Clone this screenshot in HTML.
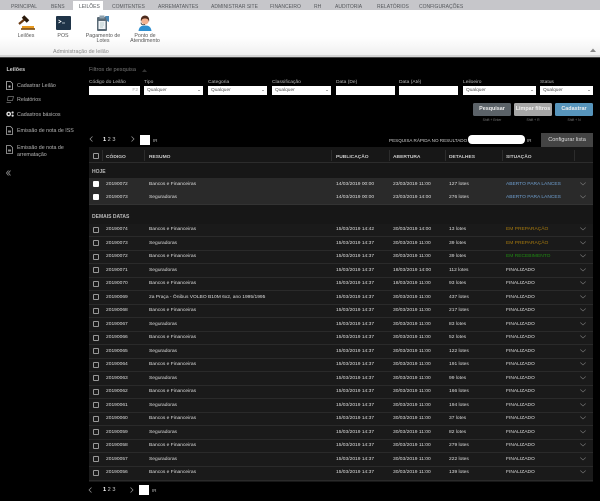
<!DOCTYPE html>
<html lang="pt"><head><meta charset="utf-8"><title>Leilões</title>
<style>
html,body{margin:0;padding:0;background:#000;width:600px;height:501px;overflow:hidden}
body{font-family:"Liberation Sans",sans-serif;font-size:5px;color:#ddd;position:relative}
.a{position:absolute;white-space:nowrap}
#tabs{position:absolute;left:0;top:0;width:600px;height:10px;background:#c6c6ca}
.tb{position:absolute;top:2.5px;font-size:5px;line-height:8px;color:#55585c;white-space:nowrap}
#act{position:absolute;left:73px;top:1px;width:30px;height:10px;background:#fff}
#rib{position:absolute;left:0;top:10px;width:600px;height:45px;background:linear-gradient(#fff 0,#fff 60%,#f0f0f0 100%)}
#ln{position:absolute;left:0;top:55px;width:600px;height:2.5px;background:#d5d5d5;border-bottom:1px solid #444;box-sizing:border-box}
.ic{position:absolute;text-align:center;color:#555;font-size:5.3px;line-height:5.8px}
.side{position:absolute;left:17px;color:#b5b5b5;font-size:5.3px;line-height:7px;white-space:nowrap}
.lb{position:absolute;top:79.5px;color:#bbb;font-size:4.9px;line-height:6px;white-space:nowrap}
.in{position:absolute;top:86px;height:9px;background:#fff;color:#555;font-size:4.8px;line-height:9.5px;box-sizing:border-box;padding-left:3px}
.in i{position:absolute;right:3px;top:3.5px;width:0;height:0;border-left:1.2px solid transparent;border-right:1.2px solid transparent;border-top:1.6px solid #555}
.btn{position:absolute;top:103px;height:13px;border-radius:1.5px;color:#eee;font-weight:bold;font-size:5.4px;line-height:13.5px;text-align:center;box-sizing:border-box}
.sh{position:absolute;top:117.5px;color:#777;font-size:3.4px;line-height:4px;text-align:center}
#tb{position:absolute;left:89px;top:147px;width:504px;height:335px;background:#171717}
.r{position:absolute;left:89px;width:504px;height:13.5px;line-height:12.5px;background:#1a1a1a;border-bottom:1px solid #2a2a2a;box-sizing:border-box;font-size:4.9px;color:#ddd;white-space:nowrap}
.r.h{background:#2a2a2a;border-bottom:1px solid #333}
.r b{position:absolute;font-weight:normal;top:.8px}
.r .c{left:17px}.r .s{left:60px}.r .p{left:247px}.r .o{left:304px}.r .d{left:360px}.r .t{left:417px}
.cb{position:absolute;left:3.5px;top:3px;width:6px;height:6px;border:1px solid #999;border-radius:1px;box-sizing:border-box}
.h .cb{background:#fff;border-color:#fff}
.r svg{position:absolute;left:491px;top:3.5px}
.th{position:absolute;top:154.3px;font-weight:bold;color:#ccc;font-size:4.9px;line-height:7px;white-space:nowrap}
.sp{position:absolute;top:150px;width:1px;height:11px;background:#2c2c2c}
.g{position:absolute;left:92px;font-weight:bold;color:#bbb;font-size:5px;line-height:6px}
.bl{color:#6f9fcf}.y{color:#a5790e}.gr{color:#1f8a12}
</style></head><body>
<div id="tabs"></div><div id="act"></div>
<div id="rib"></div>
<div id="ln"></div>
<span class="tb" style="left:11px">PRINCIPAL</span>
<span class="tb" style="left:51px">BENS</span>
<span class="tb" style="left:79px">LEILÕES</span>
<span class="tb" style="left:112px">COMITENTES</span>
<span class="tb" style="left:158px">ARREMATANTES</span>
<span class="tb" style="left:211px">ADMINISTRAR SITE</span>
<span class="tb" style="left:270px">FINANCEIRO</span>
<span class="tb" style="left:314px">RH</span>
<span class="tb" style="left:335px">AUDITORIA</span>
<span class="tb" style="left:377px">RELATÓRIOS</span>
<span class="tb" style="left:419px">CONFIGURAÇÕES</span>

<svg class="a" style="left:17px;top:15px" width="18" height="16" viewBox="0 0 18 16"><path d="M2 9L8 4" stroke="#6b3a12" stroke-width="2.2"/><path d="M6 1.5L11 6.5" stroke="#2b1a0c" stroke-width="3.6"/><rect x="5" y="11" width="12" height="2.4" fill="#e89a20"/><rect x="4" y="13.2" width="14" height="1.6" fill="#7a4a10"/></svg>
<svg class="a" style="left:56px;top:16px" width="15" height="14" viewBox="0 0 15 14"><rect width="15" height="14" rx="1" fill="#1f3448"/><path d="M2.5 4L5 5.5L2.5 7" stroke="#fff" stroke-width=".8" fill="none"/><path d="M6 7H9" stroke="#cfd8df" stroke-width=".8"/></svg>
<svg class="a" style="left:96px;top:15px" width="14" height="16" viewBox="0 0 14 16"><rect x="1" y="2" width="10" height="14" rx="1" fill="#5a6a76"/><rect x="2.5" y="6" width="7" height="8" fill="#eef2f5"/><rect x="3.5" y="0.5" width="5" height="3" fill="#8ea0ac"/><path d="M4 8H8M4 10H8M4 12H7" stroke="#8aa" stroke-width=".6"/><path d="M9 1L13 1V7L11 6" fill="#4a87b5"/></svg>
<svg class="a" style="left:138px;top:15px" width="14" height="16" viewBox="0 0 14 16"><path d="M0.5 16C1 12 3 10.5 7 10.5S13 12 13.5 16Z" fill="#2f8fd0"/><circle cx="7" cy="6" r="3.6" fill="#f2b08e"/><path d="M3 7C2 2 5 0.5 7 0.5S12 2 11 7C10.5 4 9 3.5 7 3.5S3.5 4 3 7Z" fill="#4d2a1c"/><path d="M3 7.5C3 10 5 10 7 9.5" stroke="#333" stroke-width=".7" fill="none"/></svg>
<div class="ic" style="left:10px;top:33.5px;width:32px">Leilões</div>
<div class="ic" style="left:47px;top:33.5px;width:32px">POS</div>
<div class="ic" style="left:83px;top:33.5px;width:40px">Pagamento de<br>Lotes</div>
<div class="ic" style="left:125px;top:33.5px;width:40px">Ponto de<br>Atendimento</div>
<div class="a" style="left:53px;top:49px;color:#888;font-size:5.4px;line-height:6px">Administração de leilão</div>
<svg class="a" style="left:590px;top:48px" width="6" height="4" viewBox="0 0 6 4"><path d="M0 4L3 .5L6 4Z" fill="#888"/></svg>

<div class="a" style="left:6.5px;top:67px;font-weight:bold;color:#ccc;font-size:5.4px;line-height:7px">Leilões</div>
<svg class="a" style="left:6px;top:81px" width="7" height="9" viewBox="0 0 7 9"><path d="M.5.5H4.5L6.5 2.5V8.5H.5Z" fill="none" stroke="#bbb" stroke-width=".8"/><rect x="2.5" y="4.5" width="2" height="2" fill="#bbb"/></svg>
<div class="side" style="top:82.5px">Cadastrar Leilão</div>
<svg class="a" style="left:6px;top:96px" width="8" height="7" viewBox="0 0 8 7"><path d="M2 .5H7.5L6.5 4.5H1.5ZM.5 6.5H5" fill="none" stroke="#777" stroke-width=".7"/></svg>
<div class="side" style="top:97px">Relatórios</div>
<svg class="a" style="left:6px;top:111px" width="8" height="6" viewBox="0 0 8 6"><circle cx="2.7" cy="3" r="1.7" fill="none" stroke="#ddd" stroke-width="1.4"/><circle cx="6.6" cy="1.5" r="1.1" fill="#ddd"/><circle cx="6.6" cy="4.6" r="1.1" fill="#ddd"/></svg>
<div class="side" style="top:112px">Cadastros básicos</div>
<svg class="a" style="left:6px;top:126px" width="7" height="9" viewBox="0 0 7 9"><path d="M.5.5H4.5L6.5 2.5V8.5H.5Z" fill="none" stroke="#aaa" stroke-width=".8"/><rect x="2" y="4.5" width="3" height="2" fill="#888"/></svg>
<div class="side" style="top:128px">Emissão de nota de ISS</div>
<svg class="a" style="left:6px;top:145px" width="7" height="9" viewBox="0 0 7 9"><path d="M.5.5H4.5L6.5 2.5V8.5H.5Z" fill="none" stroke="#aaa" stroke-width=".8"/><rect x="2" y="4.5" width="3" height="2" fill="#888"/></svg>
<div class="side" style="top:145px;line-height:6.8px">Emissão de nota de<br>arrematação</div>
<svg class="a" style="left:6px;top:170px" width="5" height="6" viewBox="0 0 5 6"><path d="M2.5 .5L.5 3L2.5 5.5M4.5 .5L2.5 3L4.5 5.5" fill="none" stroke="#888" stroke-width=".9"/></svg>

<div class="a" style="left:89px;top:67px;color:#777;font-size:5.6px;line-height:7px">Filtros de pesquisa</div>
<svg class="a" style="left:142px;top:69px" width="5" height="3" viewBox="0 0 5 3"><path d="M0 3L2.5 0L5 3Z" fill="#333"/></svg>
<div class="lb" style="left:89px">Código do Leilão</div>
<div class="lb" style="left:144px">Tipo</div>
<div class="lb" style="left:208px">Categoria</div>
<div class="lb" style="left:272px">Classificação</div>
<div class="lb" style="left:336px">Data (De)</div>
<div class="lb" style="left:399px">Data (Até)</div>
<div class="lb" style="left:463px">Leiloeiro</div>
<div class="lb" style="left:540px">Status</div>
<div class="in" style="left:89px;width:51px;text-align:right;padding-right:2px;color:#aaa">F2</div>
<div class="in" style="left:144px;width:59px">Qualquer<i></i></div>
<div class="in" style="left:208px;width:59px">Qualquer<i></i></div>
<div class="in" style="left:272px;width:59px">Qualquer<i></i></div>
<div class="in" style="left:336px;width:59px"></div>
<div class="in" style="left:399px;width:59px"></div>
<div class="in" style="left:463px;width:73px">Qualquer<i></i></div>
<div class="in" style="left:540px;width:53px">Qualquer<i></i></div>
<div class="btn" style="left:473px;width:38px;background:#5b6268">Pesquisar</div>
<div class="btn" style="left:514px;width:38px;background:#a6a6a6">Limpar filtros</div>
<div class="btn" style="left:555px;width:38px;background:#5795bc">Cadastrar</div>
<div class="sh" style="left:473px;width:38px">Shift + Enter</div>
<div class="sh" style="left:514px;width:38px">Shift + R</div>
<div class="sh" style="left:555px;width:38px">Shift + N</div>

<svg class="a" style="left:89px;top:136px" width="4" height="6" viewBox="0 0 4 6"><path d="M3.5 .5L1 3L3.5 5.5" fill="none" stroke="#999" stroke-width=".7"/></svg>
<div class="a" style="left:103px;top:136.5px;font-size:5.6px;line-height:7px;color:#ccc"><b style="color:#fff">1</b> 2 3</div>
<svg class="a" style="left:131px;top:136px" width="4" height="6" viewBox="0 0 4 6"><path d="M.5 .5L3 3L.5 5.5" fill="none" stroke="#999" stroke-width=".7"/></svg>
<div class="a" style="left:140px;top:135px;width:10px;height:9.5px;background:#fff"></div>
<div class="a" style="left:153px;top:137.5px;font-size:4.4px;line-height:6px;color:#bbb">IR</div>
<div class="a" style="left:389px;top:137.5px;font-size:4.6px;line-height:6px;color:#ccc">PESQUISA RÁPIDA NO RESULTADO</div>
<div class="a" style="left:468px;top:135px;width:57px;height:9px;background:#fff;border-radius:4px"></div>
<div class="a" style="left:527px;top:137.5px;font-size:4.4px;line-height:6px;color:#bbb">IR</div>
<div class="a" style="left:541px;top:133px;width:52px;height:14px;background:#444;color:#ddd;font-size:5.6px;line-height:14.5px;text-align:center">Configurar lista</div>

<div id="tb"></div>
<div class="a" style="left:89px;top:162px;width:504px;height:1px;background:#2c2c2c"></div>
<div class="a" style="left:92.5px;top:152.5px;width:6px;height:6px;border:1px solid #999;border-radius:1px;box-sizing:border-box"></div>
<div class="sp" style="left:102px"></div><div class="sp" style="left:144px"></div><div class="sp" style="left:331px"></div><div class="sp" style="left:389px"></div><div class="sp" style="left:445px"></div><div class="sp" style="left:502px"></div><div class="sp" style="left:574px"></div>
<div class="th" style="left:106px">CÓDIGO</div><div class="th" style="left:149px">RESUMO</div><div class="th" style="left:336px">PUBLICAÇÃO</div><div class="th" style="left:393px">ABERTURA</div><div class="th" style="left:449px">DETALHES</div><div class="th" style="left:506px">SITUAÇÃO</div>
<div class="g" style="top:168.5px">HOJE</div>
<div class="g" style="top:213.5px">DEMAIS DATAS</div>

<div class="r h" style="top:178px"><span class="cb"></span><b class="c">20190072</b><b class="s">Bancos e Financeiras</b><b class="p">14/03/2019 00:00</b><b class="o">23/03/2019 11:00</b><b class="d">127 lotes</b><b class="t bl">ABERTO PARA LANCES</b><svg width="6" height="4" viewBox="0 0 6 4"><path d="M.3.5L3 3L5.7.5" fill="none" stroke="#777" stroke-width=".6"/></svg></div>
<div class="r h" style="top:191px"><span class="cb"></span><b class="c">20190073</b><b class="s">Seguradoras</b><b class="p">14/03/2019 00:00</b><b class="o">23/03/2019 14:00</b><b class="d">276 lotes</b><b class="t bl">ABERTO PARA LANCES</b><svg width="6" height="4" viewBox="0 0 6 4"><path d="M.3.5L3 3L5.7.5" fill="none" stroke="#777" stroke-width=".6"/></svg></div>

<div class="r" style="top:223.5px"><span class="cb"></span><b class="c">20190074</b><b class="s">Bancos e Financeiras</b><b class="p">15/03/2019 14:42</b><b class="o">30/03/2019 14:00</b><b class="d">13 lotes</b><b class="t y">EM PREPARAÇÃO</b><svg width="6" height="4" viewBox="0 0 6 4"><path d="M.3.5L3 3L5.7.5" fill="none" stroke="#777" stroke-width=".6"/></svg></div>
<div class="r" style="top:237px"><span class="cb"></span><b class="c">20190073</b><b class="s">Seguradoras</b><b class="p">15/03/2019 14:37</b><b class="o">30/03/2019 11:00</b><b class="d">39 lotes</b><b class="t y">EM PREPARAÇÃO</b><svg width="6" height="4" viewBox="0 0 6 4"><path d="M.3.5L3 3L5.7.5" fill="none" stroke="#777" stroke-width=".6"/></svg></div>
<div class="r" style="top:250.5px"><span class="cb"></span><b class="c">20190072</b><b class="s">Bancos e Financeiras</b><b class="p">15/03/2019 14:37</b><b class="o">30/03/2019 11:00</b><b class="d">39 lotes</b><b class="t gr">EM RECEBIMENTO</b><svg width="6" height="4" viewBox="0 0 6 4"><path d="M.3.5L3 3L5.7.5" fill="none" stroke="#777" stroke-width=".6"/></svg></div>
<div class="r" style="top:264px"><span class="cb"></span><b class="c">20190071</b><b class="s">Seguradoras</b><b class="p">15/03/2019 14:37</b><b class="o">18/03/2019 14:00</b><b class="d">112 lotes</b><b class="t">FINALIZADO</b><svg width="6" height="4" viewBox="0 0 6 4"><path d="M.3.5L3 3L5.7.5" fill="none" stroke="#777" stroke-width=".6"/></svg></div>
<div class="r" style="top:277.5px"><span class="cb"></span><b class="c">20190070</b><b class="s">Bancos e Financeiras</b><b class="p">15/03/2019 14:37</b><b class="o">18/03/2019 11:00</b><b class="d">93 lotes</b><b class="t">FINALIZADO</b><svg width="6" height="4" viewBox="0 0 6 4"><path d="M.3.5L3 3L5.7.5" fill="none" stroke="#777" stroke-width=".6"/></svg></div>
<div class="r" style="top:291px"><span class="cb"></span><b class="c">20190069</b><b class="s">2a Praça - Ônibus VOLBO B10M 6x2, ano 1995/1995</b><b class="p">15/03/2019 14:37</b><b class="o">30/03/2019 11:00</b><b class="d">437 lotes</b><b class="t">FINALIZADO</b><svg width="6" height="4" viewBox="0 0 6 4"><path d="M.3.5L3 3L5.7.5" fill="none" stroke="#777" stroke-width=".6"/></svg></div>
<div class="r" style="top:304.5px"><span class="cb"></span><b class="c">20190068</b><b class="s">Bancos e Financeiras</b><b class="p">15/03/2019 14:37</b><b class="o">30/03/2019 11:00</b><b class="d">217 lotes</b><b class="t">FINALIZADO</b><svg width="6" height="4" viewBox="0 0 6 4"><path d="M.3.5L3 3L5.7.5" fill="none" stroke="#777" stroke-width=".6"/></svg></div>
<div class="r" style="top:318px"><span class="cb"></span><b class="c">20190067</b><b class="s">Seguradoras</b><b class="p">15/03/2019 14:37</b><b class="o">30/03/2019 11:00</b><b class="d">83 lotes</b><b class="t">FINALIZADO</b><svg width="6" height="4" viewBox="0 0 6 4"><path d="M.3.5L3 3L5.7.5" fill="none" stroke="#777" stroke-width=".6"/></svg></div>
<div class="r" style="top:331.5px"><span class="cb"></span><b class="c">20190066</b><b class="s">Bancos e Financeiras</b><b class="p">15/03/2019 14:37</b><b class="o">30/03/2019 11:00</b><b class="d">52 lotes</b><b class="t">FINALIZADO</b><svg width="6" height="4" viewBox="0 0 6 4"><path d="M.3.5L3 3L5.7.5" fill="none" stroke="#777" stroke-width=".6"/></svg></div>
<div class="r" style="top:345px"><span class="cb"></span><b class="c">20190065</b><b class="s">Seguradoras</b><b class="p">15/03/2019 14:37</b><b class="o">30/03/2019 11:00</b><b class="d">122 lotes</b><b class="t">FINALIZADO</b><svg width="6" height="4" viewBox="0 0 6 4"><path d="M.3.5L3 3L5.7.5" fill="none" stroke="#777" stroke-width=".6"/></svg></div>
<div class="r" style="top:358.5px"><span class="cb"></span><b class="c">20190064</b><b class="s">Bancos e Financeiras</b><b class="p">15/03/2019 14:37</b><b class="o">30/03/2019 11:00</b><b class="d">191 lotes</b><b class="t">FINALIZADO</b><svg width="6" height="4" viewBox="0 0 6 4"><path d="M.3.5L3 3L5.7.5" fill="none" stroke="#777" stroke-width=".6"/></svg></div>
<div class="r" style="top:372px"><span class="cb"></span><b class="c">20190063</b><b class="s">Seguradoras</b><b class="p">15/03/2019 14:37</b><b class="o">30/03/2019 11:00</b><b class="d">99 lotes</b><b class="t">FINALIZADO</b><svg width="6" height="4" viewBox="0 0 6 4"><path d="M.3.5L3 3L5.7.5" fill="none" stroke="#777" stroke-width=".6"/></svg></div>
<div class="r" style="top:385.5px"><span class="cb"></span><b class="c">20190062</b><b class="s">Bancos e Financeiras</b><b class="p">15/03/2019 14:37</b><b class="o">30/03/2019 11:00</b><b class="d">166 lotes</b><b class="t">FINALIZADO</b><svg width="6" height="4" viewBox="0 0 6 4"><path d="M.3.5L3 3L5.7.5" fill="none" stroke="#777" stroke-width=".6"/></svg></div>
<div class="r" style="top:399px"><span class="cb"></span><b class="c">20190061</b><b class="s">Seguradoras</b><b class="p">15/03/2019 14:37</b><b class="o">30/03/2019 11:00</b><b class="d">194 lotes</b><b class="t">FINALIZADO</b><svg width="6" height="4" viewBox="0 0 6 4"><path d="M.3.5L3 3L5.7.5" fill="none" stroke="#777" stroke-width=".6"/></svg></div>
<div class="r" style="top:412.5px"><span class="cb"></span><b class="c">20190060</b><b class="s">Bancos e Financeiras</b><b class="p">15/03/2019 14:37</b><b class="o">30/03/2019 11:00</b><b class="d">37 lotes</b><b class="t">FINALIZADO</b><svg width="6" height="4" viewBox="0 0 6 4"><path d="M.3.5L3 3L5.7.5" fill="none" stroke="#777" stroke-width=".6"/></svg></div>
<div class="r" style="top:426px"><span class="cb"></span><b class="c">20190059</b><b class="s">Seguradoras</b><b class="p">15/03/2019 14:37</b><b class="o">30/03/2019 11:00</b><b class="d">82 lotes</b><b class="t">FINALIZADO</b><svg width="6" height="4" viewBox="0 0 6 4"><path d="M.3.5L3 3L5.7.5" fill="none" stroke="#777" stroke-width=".6"/></svg></div>
<div class="r" style="top:439.5px"><span class="cb"></span><b class="c">20190058</b><b class="s">Bancos e Financeiras</b><b class="p">15/03/2019 14:37</b><b class="o">30/03/2019 11:00</b><b class="d">279 lotes</b><b class="t">FINALIZADO</b><svg width="6" height="4" viewBox="0 0 6 4"><path d="M.3.5L3 3L5.7.5" fill="none" stroke="#777" stroke-width=".6"/></svg></div>
<div class="r" style="top:453px"><span class="cb"></span><b class="c">20190057</b><b class="s">Seguradoras</b><b class="p">15/03/2019 14:37</b><b class="o">30/03/2019 11:00</b><b class="d">222 lotes</b><b class="t">FINALIZADO</b><svg width="6" height="4" viewBox="0 0 6 4"><path d="M.3.5L3 3L5.7.5" fill="none" stroke="#777" stroke-width=".6"/></svg></div>
<div class="r" style="top:466.5px;height:14.5px"><span class="cb"></span><b class="c">20190056</b><b class="s">Bancos e Financeiras</b><b class="p">15/03/2019 14:37</b><b class="o">30/03/2019 11:00</b><b class="d">139 lotes</b><b class="t">FINALIZADO</b><svg width="6" height="4" viewBox="0 0 6 4"><path d="M.3.5L3 3L5.7.5" fill="none" stroke="#777" stroke-width=".6"/></svg></div>

<svg class="a" style="left:88px;top:487px" width="4" height="6" viewBox="0 0 4 6"><path d="M3.5 .5L1 3L3.5 5.5" fill="none" stroke="#999" stroke-width=".7"/></svg>
<div class="a" style="left:103px;top:487px;font-size:5.6px;line-height:7px;color:#ccc"><b style="color:#fff">1</b> 2 3</div>
<svg class="a" style="left:130px;top:487px" width="4" height="6" viewBox="0 0 4 6"><path d="M.5 .5L3 3L.5 5.5" fill="none" stroke="#999" stroke-width=".7"/></svg>
<div class="a" style="left:139px;top:485px;width:10px;height:10px;background:#fff"></div>
<div class="a" style="left:152px;top:488px;font-size:4.4px;line-height:6px;color:#bbb">IR</div>
</body></html>
